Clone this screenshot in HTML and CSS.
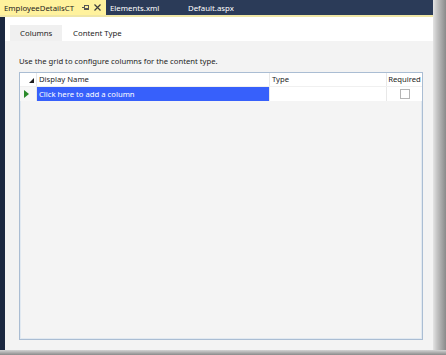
FILE: index.html
```html
<!DOCTYPE html>
<html lang="en">
<head>
    <meta charset="UTF-8">
    <title>EmployeeDetailsCT</title>
    <link rel="stylesheet" href="styles.css">
</head>
<body>
    <div class="window">
        <!-- Document tabs -->
        <div class="doc-tabs">
            <div class="doc-tab active">
                <span class="doc-name">EmployeeDetailsCT</span>
                <svg class="pin" width="7" height="5" viewBox="0 0 7 5">
                    <path d="M0 2.5H2.5" stroke="#555" stroke-width="1"/>
                    <rect x="2.5" y="0.5" width="4" height="4" fill="none" stroke="#555" stroke-width="1"/>
                    <path d="M2.5 3.5H6.5" stroke="#555" stroke-width="1"/>
                </svg>
                <svg class="close" width="7" height="7" viewBox="0 0 7 7">
                    <path d="M0.5 0.5L6.5 6.5M6.5 0.5L0.5 6.5" stroke="#3c3c3c" stroke-width="1.2"/>
                </svg>
            </div>
            <div class="doc-tab">Elements.xml</div>
            <div class="doc-tab">Default.aspx</div>
        </div>

        <div class="editor">
            <!-- Designer tabs -->
            <div class="designer-tabs">
                <div class="designer-tab selected">Columns</div>
                <div class="designer-tab">Content Type</div>
            </div>

            <div class="designer-body">
                <p class="hint">Use the grid to configure columns for the content type.</p>

                <div class="grid">
                    <div class="grid-row header">
                        <div class="cell rowhead"><span class="corner"></span></div>
                        <div class="cell name">Display Name</div>
                        <div class="cell type">Type</div>
                        <div class="cell req">Required</div>
                    </div>
                    <div class="grid-row">
                        <div class="cell rowhead"><span class="current"></span></div>
                        <div class="cell name new">Click here to add a column</div>
                        <div class="cell type"></div>
                        <div class="cell req"><span class="check"></span></div>
                    </div>
                </div>
            </div>
        </div>
    </div>
</body>
</html>
```

FILE: styles.css
```css
body {
    margin: 0;
    padding: 0;
    height: 355px;
    background:
        linear-gradient(to bottom, transparent 350px, #d4d4d4 350px, #8a8a8a 355px),
        linear-gradient(to right, #e4e4e4 433px, #c4c4c4 437px, #8a8a8a 446px);
    font-family: "Noto Sans", "Open Sans", sans-serif;
    font-size: 7.7px;
    color: #1e1e1e;
}

.window {
    width: 433px;
    height: 350px;
    display: flex;
    flex-direction: column;
    background: #f3f3f3;
}

.doc-tabs {
    display: flex;
    height: 15px;
    background: #2b3b58;
    border-bottom: 2px solid #efe6a6;
}

.doc-tab {
    display: flex;
    align-items: center;
    height: 15px;
    width: 70px;
    padding: 0 4px;
    color: #ffffff;
    font-size: 7.8px;
}

.doc-tab.active {
    width: 98px;
    background: #fff29d;
    color: #1e1e1e;
}

.doc-name {
    flex: 1;
}

.pin {
    margin-right: 5px;
}

.close {
    margin-right: 1px;
}

.editor {
    flex: 1;
    display: flex;
    flex-direction: column;
    border-left: 5px solid #1b2840;
}

.designer-tabs {
    display: flex;
    height: 24px;
    align-items: flex-end;
    background: #ffffff;
    padding-left: 5px;
}

.designer-tab {
    height: 16px;
    line-height: 16px;
    padding: 0 11px;
    font-size: 7.8px;
}

.designer-tab.selected {
    width: 42px;
    padding: 0 0 0 10px;
    background: #f0f0f0;
}

.designer-body {
    flex: 1;
    padding: 0 10px 10px 14px;
    display: flex;
    flex-direction: column;
}

.hint {
    margin: 14px 0 5px 0;
    line-height: 12px;
}

.grid {
    flex: 1;
    border: 1px solid #aabdd3;
    box-shadow: inset 0 0 0 1px #e1e9f1;
    background: #f4f4f4;
}

.grid-row {
    display: flex;
    height: 14px;
    background: #ffffff;
}

.grid-row.header {
    height: 13px;
    border-bottom: 1px solid #f0f0f0;
}

.cell {
    height: 100%;
    line-height: 13px;
    padding-left: 2px;
    box-sizing: border-box;
    border-right: 1px solid #e8e8e8;
}

.rowhead {
    width: 17px;
    position: relative;
    background: #f7f7f7;
}

.header .rowhead {
    background: #ffffff;
}

.name {
    width: 233px;
}

.type {
    width: 117px;
}

.req {
    flex: 1;
    border-right: none;
    text-align: center;
    padding-left: 0;
}

.new {
    background: #3760fb;
    color: #ffffff;
    line-height: 14px;
}

.corner {
    position: absolute;
    right: 2px;
    bottom: 3px;
    width: 0;
    height: 0;
    border-left: 5px solid transparent;
    border-bottom: 5px solid #1e1e1e;
}

.current {
    position: absolute;
    left: 4px;
    top: 3px;
    width: 0;
    height: 0;
    border-top: 4px solid transparent;
    border-bottom: 4px solid transparent;
    border-left: 5px solid #2a8a2a;
}

.check {
    display: inline-block;
    width: 10px;
    height: 10px;
    margin-top: 2px;
    box-sizing: border-box;
    border: 1px solid #b5b5b5;
    background: #ffffff;
}
```
